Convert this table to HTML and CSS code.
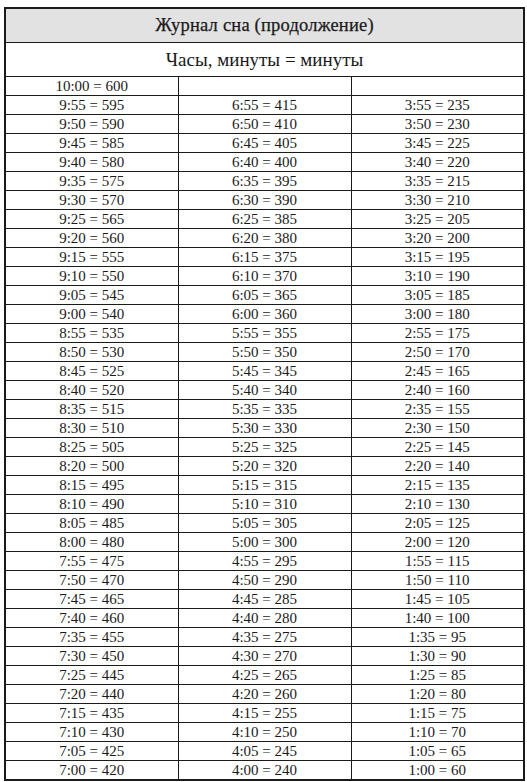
FILE: index.html
```html
<!DOCTYPE html>
<html lang="ru">
<head>
<meta charset="utf-8">
<title>Журнал сна (продолжение)</title>
<link rel="stylesheet" href="styles.css">
</head>
<body>
<table class="log">
<thead>
<tr class="title-row"><th colspan="3">Журнал сна (продолжение)</th></tr>
<tr class="sub-row"><th colspan="3">Часы, минуты = минуты</th></tr>
</thead>
<tbody>
<tr><td>10:00 = 600</td><td></td><td></td></tr>
<tr><td>9:55 = 595</td><td>6:55 = 415</td><td>3:55 = 235</td></tr>
<tr><td>9:50 = 590</td><td>6:50 = 410</td><td>3:50 = 230</td></tr>
<tr><td>9:45 = 585</td><td>6:45 = 405</td><td>3:45 = 225</td></tr>
<tr><td>9:40 = 580</td><td>6:40 = 400</td><td>3:40 = 220</td></tr>
<tr><td>9:35 = 575</td><td>6:35 = 395</td><td>3:35 = 215</td></tr>
<tr><td>9:30 = 570</td><td>6:30 = 390</td><td>3:30 = 210</td></tr>
<tr><td>9:25 = 565</td><td>6:25 = 385</td><td>3:25 = 205</td></tr>
<tr><td>9:20 = 560</td><td>6:20 = 380</td><td>3:20 = 200</td></tr>
<tr><td>9:15 = 555</td><td>6:15 = 375</td><td>3:15 = 195</td></tr>
<tr><td>9:10 = 550</td><td>6:10 = 370</td><td>3:10 = 190</td></tr>
<tr><td>9:05 = 545</td><td>6:05 = 365</td><td>3:05 = 185</td></tr>
<tr><td>9:00 = 540</td><td>6:00 = 360</td><td>3:00 = 180</td></tr>
<tr><td>8:55 = 535</td><td>5:55 = 355</td><td>2:55 = 175</td></tr>
<tr><td>8:50 = 530</td><td>5:50 = 350</td><td>2:50 = 170</td></tr>
<tr><td>8:45 = 525</td><td>5:45 = 345</td><td>2:45 = 165</td></tr>
<tr><td>8:40 = 520</td><td>5:40 = 340</td><td>2:40 = 160</td></tr>
<tr><td>8:35 = 515</td><td>5:35 = 335</td><td>2:35 = 155</td></tr>
<tr><td>8:30 = 510</td><td>5:30 = 330</td><td>2:30 = 150</td></tr>
<tr><td>8:25 = 505</td><td>5:25 = 325</td><td>2:25 = 145</td></tr>
<tr><td>8:20 = 500</td><td>5:20 = 320</td><td>2:20 = 140</td></tr>
<tr><td>8:15 = 495</td><td>5:15 = 315</td><td>2:15 = 135</td></tr>
<tr><td>8:10 = 490</td><td>5:10 = 310</td><td>2:10 = 130</td></tr>
<tr><td>8:05 = 485</td><td>5:05 = 305</td><td>2:05 = 125</td></tr>
<tr><td>8:00 = 480</td><td>5:00 = 300</td><td>2:00 = 120</td></tr>
<tr><td>7:55 = 475</td><td>4:55 = 295</td><td>1:55 = 115</td></tr>
<tr><td>7:50 = 470</td><td>4:50 = 290</td><td>1:50 = 110</td></tr>
<tr><td>7:45 = 465</td><td>4:45 = 285</td><td>1:45 = 105</td></tr>
<tr><td>7:40 = 460</td><td>4:40 = 280</td><td>1:40 = 100</td></tr>
<tr><td>7:35 = 455</td><td>4:35 = 275</td><td>1:35 = 95</td></tr>
<tr><td>7:30 = 450</td><td>4:30 = 270</td><td>1:30 = 90</td></tr>
<tr><td>7:25 = 445</td><td>4:25 = 265</td><td>1:25 = 85</td></tr>
<tr><td>7:20 = 440</td><td>4:20 = 260</td><td>1:20 = 80</td></tr>
<tr><td>7:15 = 435</td><td>4:15 = 255</td><td>1:15 = 75</td></tr>
<tr><td>7:10 = 430</td><td>4:10 = 250</td><td>1:10 = 70</td></tr>
<tr><td>7:05 = 425</td><td>4:05 = 245</td><td>1:05 = 65</td></tr>
<tr><td>7:00 = 420</td><td>4:00 = 240</td><td>1:00 = 60</td></tr>
</tbody>
</table>
</body>
</html>
```

FILE: styles.css
```css
html, body {
  margin: 0;
  padding: 0;
  background: #ffffff;
}

body {
  padding: 7px 0 0 4px;
  font-family: "Liberation Serif", "DejaVu Serif", serif;
  color: #1a1a1a;
}

.log {
  width: 521px;
  border-collapse: collapse;
  table-layout: fixed;
  border: 2px solid #1a1a1a;
}

.log th,
.log td {
  border: 1px solid #1a1a1a;
  padding: 0;
  text-align: center;
  font-weight: normal;
}

.title-row th {
  height: 33px;
  background: #e2e2e2;
  font-size: 18.5px;
  letter-spacing: 0.2px;
  -webkit-text-stroke: 0.25px #1a1a1a;
}

.sub-row th {
  height: 33px;
  font-size: 19px;
}

.log td {
  height: 18px;
  font-size: 15px;
  line-height: 18px;
}
```
